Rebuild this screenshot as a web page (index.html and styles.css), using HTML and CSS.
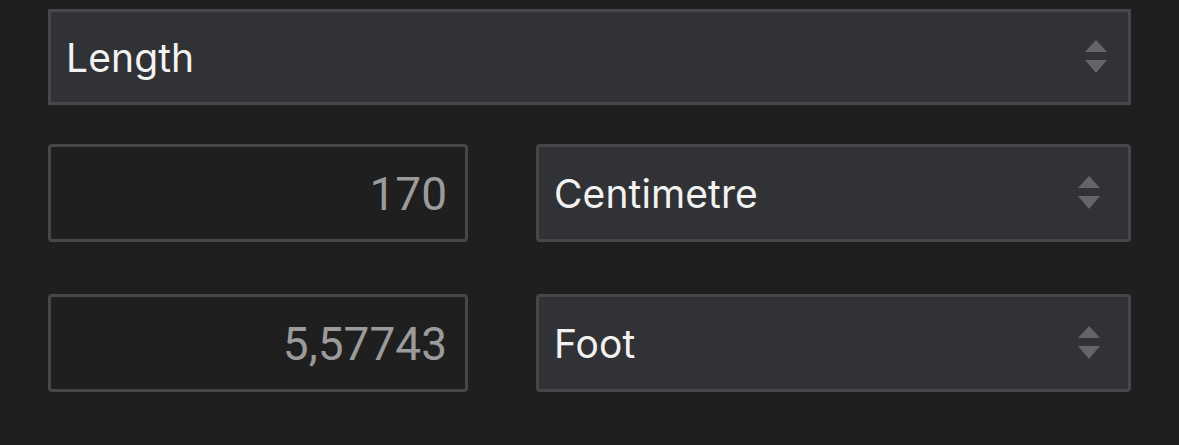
FILE: index.html
```html
<!DOCTYPE html>
<html lang="en">
<head>
  <meta charset="UTF-8">
  <meta name="viewport" content="width=device-width, initial-scale=1">
  <title>Unit Converter</title>
  <link rel="stylesheet" href="styles.css">
</head>
<body>
  <div class="converter">
    <div class="picker picker-kind">
      <select id="kind">
        <option>Length</option>
        <option>Mass</option>
        <option>Temperature</option>
      </select>
      <svg class="arrows" viewBox="0 0 22 34"><path d="M11 0 L22 12 L0 12 Z M0 20 L22 20 L11 33 Z"/></svg>
    </div>

    <div class="row">
      <input type="text" class="amount" id="from-value" value="170">
      <div class="picker">
        <select id="from-unit">
          <option>Centimetre</option>
          <option>Metre</option>
          <option>Foot</option>
        </select>
        <svg class="arrows" viewBox="0 0 22 34"><path d="M11 0 L22 12 L0 12 Z M0 20 L22 20 L11 33 Z"/></svg>
      </div>
    </div>

    <div class="row">
      <input type="text" class="amount" id="to-value" value="5,57743" readonly>
      <div class="picker">
        <select id="to-unit">
          <option>Foot</option>
          <option>Centimetre</option>
          <option>Metre</option>
        </select>
        <svg class="arrows" viewBox="0 0 22 34"><path d="M11 0 L22 12 L0 12 Z M0 20 L22 20 L11 33 Z"/></svg>
      </div>
    </div>
  </div>
</body>
</html>
```

FILE: styles.css
```css
body {
  margin: 0;
  background-color: #1f1f1f;
  font-family: Inter, 'Noto Sans', sans-serif;
}

.converter {
  width: 1083px;
  padding: 9px 0 0 48px;
  display: flex;
  flex-direction: column;
  gap: 39px;
}

.converter .row + .row {
  margin-top: 13px;
}

.row {
  display: flex;
  gap: 68px;
}

.picker {
  position: relative;
  flex: 1;
}

select {
  appearance: none;
  -webkit-appearance: none;
  width: 100%;
  height: 98px;
  margin: 0;
  padding: 0 60px 0 15px;
  background: #313236;
  color: #f2f2f2;
  border: 3px solid #45474b;
  border-radius: 4px;
  font-family: inherit;
  font-size: 39px;
  letter-spacing: 0.1px;
  outline: none;
}

.picker-kind select {
  height: 96px;
  border-radius: 0;
}

.arrows {
  position: absolute;
  right: 31px;
  top: 50%;
  width: 22px;
  height: 34px;
  margin-top: -17px;
  fill: #656567;
  pointer-events: none;
}

.picker-kind .arrows {
  right: 24px;
}

.amount {
  box-sizing: border-box;
  width: 420px;
  height: 98px;
  margin: 0;
  padding: 2px 18px 0 16px;
  background: #1f1f1f;
  color: #9b9b9b;
  border: 3px solid #45474b;
  border-radius: 4px;
  font-family: Roboto, 'Liberation Sans', sans-serif;
  font-size: 46px;
  text-align: right;
  outline: none;
}
```
